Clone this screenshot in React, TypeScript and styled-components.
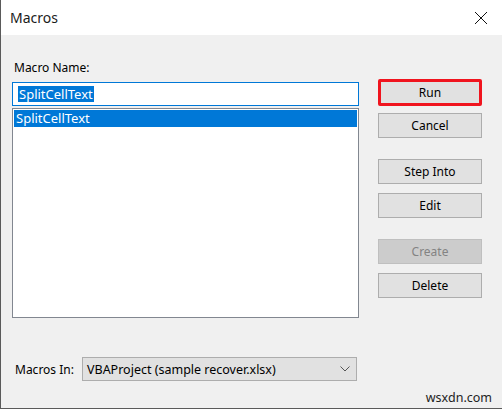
import styled, { createGlobalStyle } from "styled-components"

const Global = createGlobalStyle`
    html, body {
        margin: 0;
        padding: 0;
        background: #f0f0f0;
    }
    body {
        font-family: "Noto Sans", "Open Sans", sans-serif;
        color: #000;
    }
`

const Window = styled.div`
    width: 502px;
    height: 409px;
    box-sizing: border-box;
    border-left: 1px solid #5a5a5a;
    border-bottom: 1px solid #5a5a5a;
    background: #f0f0f0;
    display: flex;
    flex-direction: column;
    overflow: hidden;
`

const TitleBar = styled.div`
    height: 35px;
    flex: none;
    background: #fff;
    display: flex;
    align-items: center;
    justify-content: space-between;
    padding: 0 14px 0 9px;
    font-size: 14px;
    color: #1b1b1b;
`

const Body = styled.div`
    flex: 1;
    display: flex;
    padding: 0 0 0 11px;
    position: relative;
`

const LeftCol = styled.div`
    width: 347px;
    display: flex;
    flex-direction: column;
`

const Label = styled.div`
    font-size: 12px;
    line-height: 16px;
    margin-top: 25px;
    padding-left: 2px;
`

const NameInput = styled.div`
    margin-top: 6px;
    height: 24px;
    box-sizing: border-box;
    border: 1px solid #0078d7;
    background: #fff;
    display: flex;
    align-items: center;
    padding-left: 5px;
`

const Selected = styled.span`
    background: #0078d7;
    color: #fff;
    font-size: 13px;
    line-height: 16px;
    padding: 0 1px;
`

const List = styled.div`
    margin-top: 2px;
    height: 210px;
    box-sizing: border-box;
    border: 1px solid #828790;
    background: #fff;
    padding: 1px;
`

const ListRow = styled.div<{ $active?: boolean }>`
    height: 17px;
    line-height: 17px;
    font-size: 13px;
    padding-left: 2px;
    background: ${p => (p.$active ? "#0078d7" : "transparent")};
    color: ${p => (p.$active ? "#fff" : "#000")};
`

const FooterRow = styled.div`
    margin-top: 39px;
    display: flex;
    align-items: center;
`

const FooterLabel = styled.div`
    font-size: 12px;
    width: 70px;
    box-sizing: border-box;
    padding-left: 3px;
`

const Select = styled.div`
    width: 275px;
    height: 24px;
    box-sizing: border-box;
    border: 1px solid #adadad;
    background: #e1e1e1;
    display: flex;
    align-items: center;
    justify-content: space-between;
    padding: 0 6px 0 4px;
    font-size: 12.5px;
`

const RightCol = styled.div`
    margin-left: 19px;
    padding-top: 44px;
    width: 104px;
    display: flex;
    flex-direction: column;
`

const Button = styled.div<{ $gap?: number; $disabled?: boolean; $marked?: boolean }>`
    height: 25px;
    box-sizing: border-box;
    margin-top: ${p => p.$gap ?? 0}px;
    border: ${p => (p.$marked ? "3px solid #f0141e" : `1px solid ${p.$disabled ? "#bfbfbf" : "#adadad"}`)};
    border-radius: ${p => (p.$marked ? "2px" : "0")};
    background: ${p => (p.$disabled ? "#cccccc" : "#e1e1e1")};
    color: ${p => (p.$disabled ? "#838383" : "#000")};
    font-size: 12px;
    display: flex;
    align-items: center;
    justify-content: center;
`

const RunButton = styled(Button)`
    height: 27px;
`

const Watermark = styled.div`
    position: absolute;
    right: 10px;
    bottom: 2px;
    font-size: 12.5px;
    color: #222;
`

function CloseIcon() {
    return (
        <svg width="14" height="14" viewBox="0 0 14 14">
            <path d="M1 1 L13 13 M13 1 L1 13" stroke="#111" strokeWidth="1" fill="none" />
        </svg>
    )
}

function Chevron() {
    return (
        <svg width="10" height="6" viewBox="0 0 10 6">
            <path d="M0.5 0.5 L5 5 L9.5 0.5" stroke="#555" strokeWidth="1" fill="none" />
        </svg>
    )
}

export default function App() {
    return (
        <>
            <Global />
            <Window>
                <TitleBar>
                    <span>Macros</span>
                    <CloseIcon />
                </TitleBar>
                <Body>
                    <LeftCol>
                        <Label>Macro Name:</Label>
                        <NameInput>
                            <Selected>SplitCellText</Selected>
                        </NameInput>
                        <List>
                            <ListRow $active>SplitCellText</ListRow>
                        </List>
                        <FooterRow>
                            <FooterLabel>Macros In:</FooterLabel>
                            <Select>
                                <span>VBAProject (sample recover.xlsx)</span>
                                <Chevron />
                            </Select>
                        </FooterRow>
                    </LeftCol>
                    <RightCol>
                        <RunButton $marked>Run</RunButton>
                        <Button $gap={7}>Cancel</Button>
                        <Button $gap={21}>Step Into</Button>
                        <Button $gap={9}>Edit</Button>
                        <Button $gap={21} $disabled>Create</Button>
                        <Button $gap={9}>Delete</Button>
                    </RightCol>
                    <Watermark>wsxdn.com</Watermark>
                </Body>
            </Window>
        </>
    )
}
